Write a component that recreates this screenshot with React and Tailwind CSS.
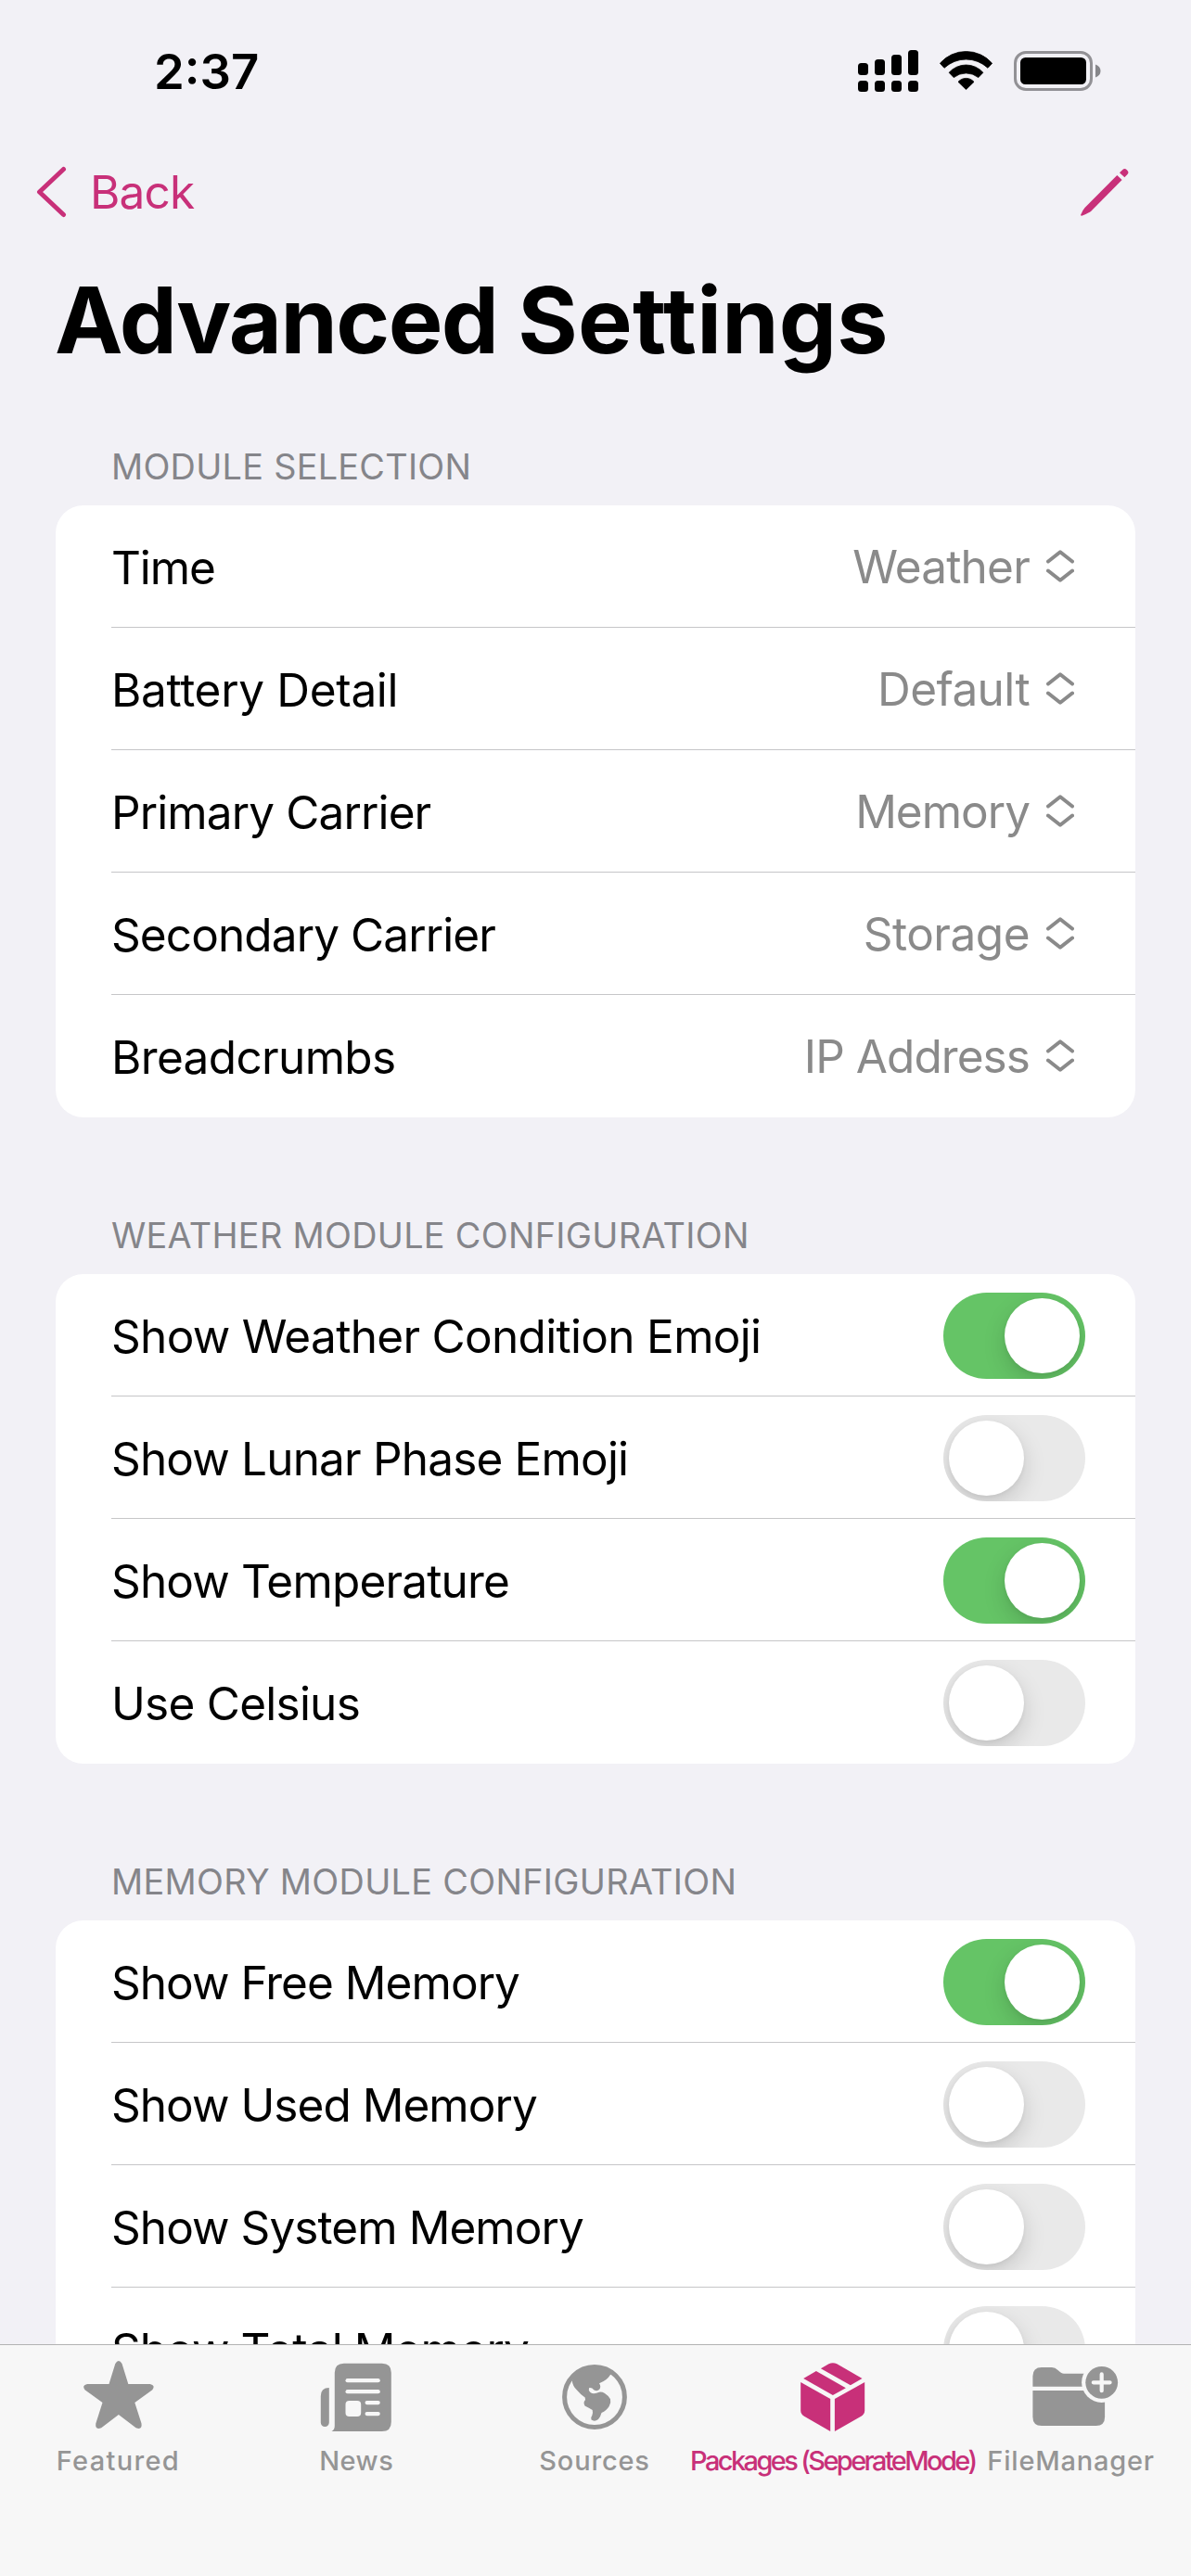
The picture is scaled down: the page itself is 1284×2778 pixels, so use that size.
import React from "react";

const MODULES = [
  { label: "Time", track: "tracking-[-1.1px]", value: "Weather", valueTrack: "tracking-[-0.79px]" },
  { label: "Battery Detail", track: "tracking-[-0.32px]", value: "Default", valueTrack: "tracking-[-0.6px]" },
  { label: "Primary Carrier", track: "tracking-[-0.88px]", value: "Memory", valueTrack: "tracking-[-1px]" },
  { label: "Secondary Carrier", track: "tracking-[-0.9px]", value: "Storage", valueTrack: "tracking-[-0.5px]" },
  { label: "Breadcrumbs", track: "tracking-[-0.65px]", value: "IP Address", valueTrack: "tracking-[-0.93px]" },
];

const WEATHER = [
  { label: "Show Weather Condition Emoji", track: "tracking-[-0.69px]", on: true },
  { label: "Show Lunar Phase Emoji", track: "tracking-[-0.83px]", on: false },
  { label: "Show Temperature", track: "tracking-[-0.83px]", on: true },
  { label: "Use Celsius", track: "tracking-[-0.75px]", on: false },
];

const MEMORY = [
  { label: "Show Free Memory", track: "tracking-[-0.96px]", on: true },
  { label: "Show Used Memory", track: "tracking-[-0.96px]", on: false },
  { label: "Show System Memory", track: "tracking-[-0.93px]", on: false },
  { label: "Show Total Memory", track: "tracking-[-0.95px]", on: false },
];

function Signal() {
  return (
    <svg width="66" height="46" viewBox="0 0 66 46">
      <rect x="0" y="14" width="11" height="13" rx="3.5" />
      <rect x="18" y="10" width="11" height="17" rx="3.5" />
      <rect x="36" y="5" width="11" height="22" rx="3.5" />
      <rect x="54" y="0" width="11" height="27" rx="3.5" />
      <rect x="0" y="33" width="11" height="12" rx="3.5" />
      <rect x="18" y="33" width="11" height="12" rx="3.5" />
      <rect x="36" y="33" width="11" height="12" rx="3.5" />
      <rect x="54" y="33" width="11" height="12" rx="3.5" />
    </svg>
  );
}

function Wifi() {
  return (
    <svg width="57" height="42" viewBox="0 0 57 42" stroke="#000" strokeWidth="0.8" strokeLinejoin="round">
      <path d="M.4 13.3A37.2 37.2 0 0 1 56.6 13.3L52 18.3A34.3 34.3 0 0 0 5 18.3Z" />
      <path d="M10.1 23.3A24.6 24.6 0 0 1 46.9 23.3L41.8 28.6A21.2 21.2 0 0 0 15.2 28.6Z" />
      <path d="M20 33.3A11.2 11.2 0 0 1 37 33.3L28.5 41.6Z" />
    </svg>
  );
}

function Battery() {
  return (
    <svg width="95" height="43" viewBox="0 0 95 43">
      <rect x="1.5" y="1.5" width="82" height="40" rx="11.5" fill="none" stroke="#929195" strokeWidth="3" />
      <rect x="7" y="7" width="71" height="29" rx="5.5" />
      <path d="M88 14.5Q93.500 16.5 93.500 21.5Q93.500 26.500 88 28.5Z" fill="#86868a" />
    </svg>
  );
}

function Pencil() {
  return (
    <svg width="52" height="52" viewBox="0 0 52 52" fill="#c83079">
      <path d="M39.3 8L44.6 13L11 47Q9.600 48.400 1.200 51.700Q0 51.800 .2 50.500Q2.600 45 4.500 43Z" />
      <path d="M42 5.200L45.300 2Q47.500 .2 49.600 2L50.700 3.200Q52.200 5 50.500 7L47.400 10.200Z" />
    </svg>
  );
}

function UpDown() {
  return (
    <svg className="ml-[18px]" width="30" height="35" viewBox="0 0 30 35" fill="none" stroke="#8a8a8a" strokeWidth="4" strokeLinecap="round" strokeLinejoin="round">
      <path d="M2 12.500L15 2.300L28 12.500" />
      <path d="M2 22.500L15 32.700L28 22.500" />
    </svg>
  );
}

const KNOB =
  "h-[81px] w-[81px] rounded-full bg-white shadow-[0_9px_24px_rgba(0,0,0,0.15),0_2px_5px_rgba(0,0,0,0.05)]";

function Toggle({ on }) {
  return (
    <div
      className={
        "mt-[2px] mr-[54px] flex h-[93px] w-[153px] shrink-0 items-center overflow-hidden rounded-full px-[6px] " +
        (on ? "justify-end bg-[#65c466]" : "justify-start bg-[#e9e9e9]")
      }
    >
      <div className={KNOB} />
    </div>
  );
}

function Row({ label, track, children }) {
  return (
    <div className="flex h-[132px] items-center justify-between border-b border-[#c6c6c8] last:border-transparent">
      <span className={"pt-[3px] text-[49.5px] leading-[60px] whitespace-nowrap text-black " + track}>{label}</span>
      {children}
    </div>
  );
}

function Section({ title, track, className, children }) {
  return (
    <section className={"mx-[60px] " + className}>
      <h2 className={"mb-[17px] ml-[60px] text-[37.8px] leading-[50px] whitespace-nowrap text-[#85858a] " + track}>{title}</h2>
      <div className="rounded-[30px] bg-white pl-[60px]">{children}</div>
    </section>
  );
}

function StarIcon() {
  return (
    <path d="M46.300 14Q49.900 8.200 53.500 14L60.300 36H83.800Q90 37.500 86.300 42.300L67.300 56L74.500 78.500Q75.500 86 68.600 83.200L49.900 69L31.200 83.200Q24.300 86 25.300 78.500L32.500 56L13.500 42.300Q9.800 37.500 16 36H39.500Z" />
  );
}

function NewsIcon() {
  return (
    <>
      <path d="M19.800 40V77.500A4.500 4.500 0 0 1 10.800 77.500V49Q10.800 40 19.800 40Z" />
      <path d="M35.800 13.700H76.800Q86.800 13.700 86.800 23.700V77Q86.800 87 76.800 87H22.500Q25.800 85.500 25.800 81V23.700Q25.800 13.700 35.800 13.700Z" />
      <g fill="#f7f7f7">
        <rect x="37.500" y="30" width="37.300" height="4.300" rx="2.150" />
        <rect x="37.500" y="42" width="37.300" height="4.300" rx="2.150" />
        <rect x="37.500" y="54" width="16.700" height="17" rx="4" />
        <rect x="58.500" y="54" width="16.300" height="4.200" rx="2.100" />
        <rect x="58.500" y="66" width="16.300" height="4.200" rx="2.100" />
      </g>
    </>
  );
}

function GlobeIcon() {
  return (
    <>
      <circle cx="49" cy="50" r="32.400" fill="none" stroke="#959595" strokeWidth="5" />
      <path d="M24.700 32.300Q33 17 49 17Q60 17 68 25L66 26Q62.500 32 54 35.300Q56.500 39 54 42Q52 44 48.500 42.500Q46 39.500 43 40.200Q42 42.500 44.500 45Q48 47.500 54 44.700Q57 44.300 60 46Q64 48.500 66 52.300Q67 56 64.700 60Q62 64.500 56.500 67Q55.500 71 53 74Q49 77 45.500 74.500Q44.500 72 46.300 70Q47.500 67 46.700 64Q43.500 62 38.500 59.500Q37 57.500 37.700 55Q39.800 52.500 38.700 50.500Q34 47.500 29.700 42.300Q25.500 38.500 24.700 32.300Z" />
    </>
  );
}

function PackageIcon() {
  return (
    <>
      <path d="M17.200 30L30.900 22L62.900 40.300L48.900 48Z" />
      <path d="M35.900 19.300L44.500 14.300Q48.900 12 53.300 14.300L80.500 30L67.900 37.300Z" />
      <path d="M14.200 34L46.200 52V87L18 70.800Q14.200 68.500 14.200 64.500Z" />
      <path d="M83.200 34L50.900 52V87L79.400 70.800Q83.200 68.500 83.200 64.500Z" />
    </>
  );
}

function FolderIcon() {
  return (
    <>
      <path d="M7.400 38.700V27.500Q7.400 18 17 18H28Q31.500 18 34.500 21Q38 24.700 41 24.700H72V38.700Z" />
      <path d="M7.400 43H85.100V71.500Q85.100 81 75.500 81H17Q7.400 81 7.400 71.500Z" />
      <circle cx="81.700" cy="34.300" r="21.600" fill="#f7f7f7" />
      <circle cx="81.700" cy="34.300" r="17.400" />
      <path d="M81.700 25.400V43.200M72.800 34.300H90.600" stroke="#f7f7f7" strokeWidth="4.200" strokeLinecap="round" />
    </>
  );
}

const TABS = [
  { label: "Featured", track: "tracking-[1.31px]", Icon: StarIcon },
  { label: "News", track: "tracking-[0.49px]", Icon: NewsIcon },
  { label: "Sources", track: "tracking-[0.81px]", Icon: GlobeIcon },
  { label: "Packages (SeperateMode)", track: "tracking-[-2.62px]", Icon: PackageIcon, active: true },
  { label: "FileManager", track: "tracking-[0.79px]", Icon: FolderIcon },
];

function TabBar() {
  return (
    <nav className="grid h-[250px] shrink-0 grid-cols-5 items-start border-t border-[#b3b3b3] bg-[#f7f7f7]">
      {TABS.map(({ label, track, Icon, active }) => (
        <div
          key={label}
          className={"flex min-w-0 flex-col items-center pt-[6px] " + (active ? "text-[#c83079]" : "text-[#959595]")}
        >
          <svg width="100" height="100" viewBox="0 0 100 100" fill="currentColor">
            <Icon />
          </svg>
          <span className={"mt-px mr-[2px] text-[29px] leading-[36px] font-medium whitespace-nowrap " + track}>{label}</span>
        </div>
      ))}
    </nav>
  );
}

export default function App() {
  return (
    <div className="flex h-[2778px] w-[1284px] flex-col overflow-hidden bg-[#f2f1f6] font-[Inter,'Liberation_Sans',sans-serif]">
      <main className="min-h-0 flex-1 overflow-hidden">
        <header>
          <div className="flex h-[154px] items-center justify-between pr-[96px] pl-[166px]">
            <span className="text-[52.6px] leading-[60px] font-semibold text-black">2:37</span>
            <div className="flex items-start">
              <Signal />
              <div className="mt-px ml-[22px]">
                <Wifi />
              </div>
              <div className="mt-px ml-[23px]">
                <Battery />
              </div>
            </div>
          </div>
          <div className="flex h-[106px] items-center justify-between pr-[67px] pl-[38px] text-[#c83079]">
            <div className="flex items-center">
              <svg width="36" height="56" viewBox="0 0 36 56" fill="none" stroke="currentColor" strokeWidth="5" strokeLinecap="round" strokeLinejoin="round">
                <path d="M30.500 3.500L4.500 28L30.500 52.500" />
              </svg>
              <span className="ml-[23px] text-[49.5px] leading-[60px] tracking-[-0.85px]">Back</span>
            </div>
            <Pencil />
          </div>
          <h1 className="mt-[25px] ml-[59px] h-[120px] text-[98.6px] leading-[120px] font-bold whitespace-nowrap text-black">
            <span className="tracking-[-1.6px]">Advanced </span>
            <span className="tracking-[0.25px]">Settings</span>
          </h1>
        </header>

        <Section title="MODULE SELECTION" track="tracking-[0.28px]" className="mt-[73px]">
          {MODULES.map((m) => (
            <Row key={m.label} label={m.label} track={m.track}>
              <div className="mr-[66px] flex items-center">
                <span className={"pt-px text-[49.5px] leading-[60px] whitespace-nowrap text-[#8a8a8a] " + m.valueTrack}>
                  {m.value}
                </span>
                <UpDown />
              </div>
            </Row>
          ))}
        </Section>

        <Section title="WEATHER MODULE CONFIGURATION" track="tracking-[0.31px]" className="mt-[102px]">
          {WEATHER.map((r) => (
            <Row key={r.label} label={r.label} track={r.track}>
              <Toggle on={r.on} />
            </Row>
          ))}
        </Section>

        <Section title="MEMORY MODULE CONFIGURATION" track="tracking-[0.32px]" className="mt-[102px]">
          {MEMORY.map((r) => (
            <Row key={r.label} label={r.label} track={r.track}>
              <Toggle on={r.on} />
            </Row>
          ))}
        </Section>
      </main>
      <TabBar />
    </div>
  );
}
